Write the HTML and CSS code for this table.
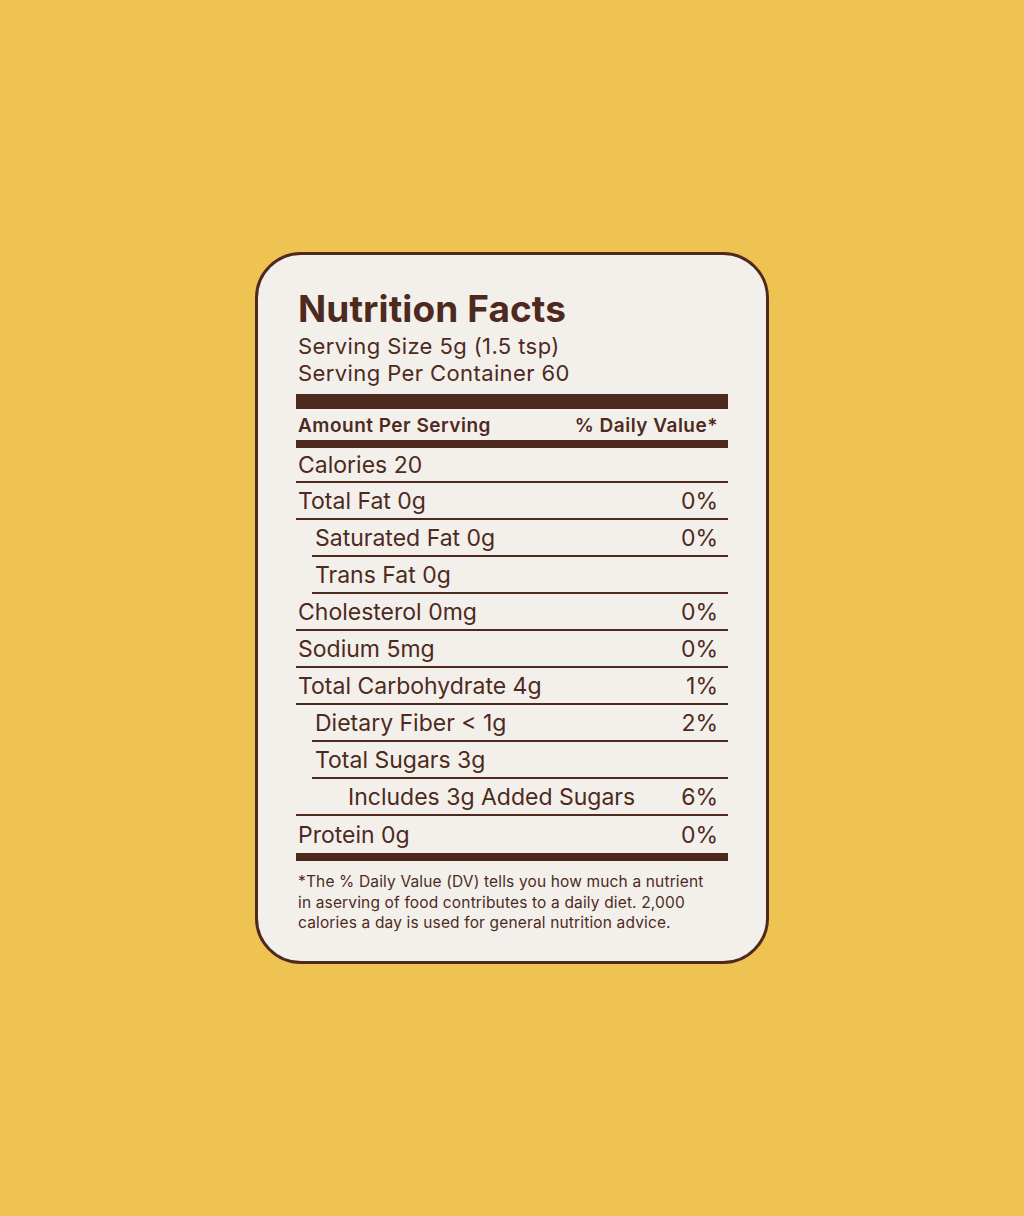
FILE: index.html
```html
<!DOCTYPE html>
<html lang="en">
<head>
<meta charset="utf-8">
<title>Nutrition Facts</title>
<link rel="stylesheet" href="styles.css">
</head>
<body>
<main class="page">
  <section class="card">
    <h1 class="title">Nutrition Facts</h1>
    <p class="serving">Serving Size 5g (1.5 tsp)</p>
    <p class="serving">Serving Per Container 60</p>
    <div class="bar bar-thick"></div>
    <div class="head-row">
      <span>Amount Per Serving</span>
      <span>% Daily Value*</span>
    </div>
    <div class="bar bar-mid"></div>
    <ul class="rows">
      <li class="row row-first"><span>Calories 20</span></li>
      <li class="row"><span>Total Fat 0g</span><span>0%</span></li>
      <li class="row indent"><span>Saturated Fat 0g</span><span>0%</span></li>
      <li class="row indent"><span>Trans Fat 0g</span></li>
      <li class="row"><span>Cholesterol 0mg</span><span>0%</span></li>
      <li class="row"><span>Sodium 5mg</span><span>0%</span></li>
      <li class="row"><span>Total Carbohydrate 4g</span><span>1%</span></li>
      <li class="row indent"><span>Dietary Fiber &lt; 1g</span><span>2%</span></li>
      <li class="row indent"><span>Total Sugars 3g</span></li>
      <li class="row indent2"><span>Includes 3g Added Sugars</span><span>6%</span></li>
      <li class="row row-last"><span>Protein 0g</span><span>0%</span></li>
    </ul>
    <div class="bar bar-mid"></div>
    <p class="note">*The % Daily Value (DV) tells you how much a nutrient in aserving of food contributes to a daily diet. 2,000 calories a day is used for general nutrition advice.</p>
  </section>
</main>
</body>
</html>
```

FILE: styles.css
```css
* { box-sizing: border-box; }
html, body { margin: 0; padding: 0; }
body {
  background: #efc352;
  font-family: Inter, "Noto Sans", sans-serif;
  color: #4e2a1e;
}
.page {
  width: 1024px;
  height: 1216px;
  display: flex;
  justify-content: center;
  padding-top: 252px;
}
.card {
  width: 514px;
  height: 712px;
  background: #f3f0eb;
  border: 3px solid #4e2a1e;
  border-radius: 46px;
  padding: 30px 38px 0 38px;
}
.title {
  margin: 0 0 0 2px;
  font-size: 37px;
  line-height: 48px;
  font-weight: 700;
  letter-spacing: 0.1px;
}
.serving {
  margin: 0 0 0 2px;
  font-size: 22px;
  line-height: 27px;
  font-weight: 400;
  letter-spacing: 0.4px;
}
.bar { background: #4e2a1e; }
.bar-thick { height: 15px; margin-top: 7px; }
.bar-mid { height: 8px; }
.head-row {
  height: 31px;
  display: flex;
  justify-content: space-between;
  align-items: center;
  padding: 1px 10px 0 2px;
  font-size: 19px;
  font-weight: 600;
  letter-spacing: 0.5px;
}
.rows { list-style: none; margin: 0; padding: 0; }
.row {
  height: 37px;
  display: flex;
  justify-content: space-between;
  align-items: center;
  padding: 1px 10px 0 2px;
  border-bottom: 2px solid #4e2a1e;
  font-size: 23px;
  letter-spacing: 0;
}
.row-first { height: 35px; }
.row-last { border-bottom: none; }
.indent { margin-left: 16px; padding-left: 3px; }
.indent2 { margin-left: 0; padding-left: 52px; }
.note {
  width: 414px;
  margin: 11px 0 0 2px;
  font-size: 15.5px;
  line-height: 20.5px;
  letter-spacing: 0.15px;
}
```
